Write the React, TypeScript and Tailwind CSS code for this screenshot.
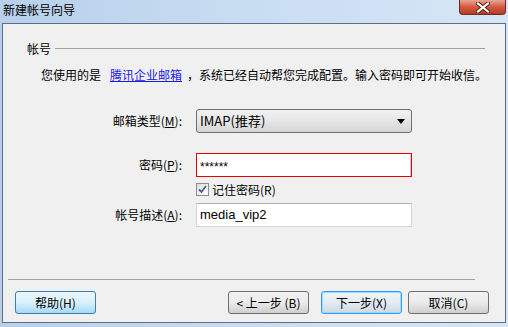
import React from 'react';

const cjk = { fontFamily: '"Microsoft YaHei", "Noto Sans CJK SC", "Liberation Sans", sans-serif' };
const latin = { fontFamily: '"Liberation Sans", "Noto Sans CJK SC", sans-serif' };

type BtnProps = {
  label: React.ReactNode;
  variant?: 'normal' | 'hover' | 'default';
};

const WinButton = ({ label, variant = 'normal' }: BtnProps) => {
  const styles = {
    normal: 'border-[#707070] bg-gradient-to-b from-[#f2f2f2] via-[#ebebeb] to-[#cfcfcf]',
    hover: 'border-[#3c7fb1] bg-gradient-to-b from-[#eaf6fd] via-[#d9f0fc] to-[#a7d9f5]',
    default: 'border-[#3399ff] bg-gradient-to-b from-[#eef5fa] via-[#e3ecf3] to-[#cdd9e3] shadow-[inset_0_0_0_1px_#9fdcf7]',
  };
  return (
    <button
      className={`w-[81px] h-[23px] rounded-[3px] border text-[12px] text-black flex items-center justify-center ${styles[variant]}`}
      style={cjk}
    >
      {label}
    </button>
  );
};

const FieldLabel = ({ children }: { children: React.ReactNode }) => (
  <div className="w-[179px] text-right text-[12px] text-black leading-[24px] whitespace-nowrap" style={cjk}>
    {children}
  </div>
);

const App = () => {
  return (
    <div className="w-[508px] h-[327px] flex flex-col bg-gradient-to-r from-[#b8d0ea] via-[#c9ddf2] to-[#d6e6f6] overflow-hidden">
      {/* title bar */}
      <div className="h-[23px] flex items-start relative">
        <div className="pl-[3px] pt-[2px] text-[12px] leading-[16px] text-black" style={cjk}>
          新建帐号向导
        </div>
        <div className="ml-auto mr-[2px] w-[47px] h-[15px] rounded-b-[4px] border border-t-0 border-[#6e2a20] bg-gradient-to-b from-[#e8a595] via-[#cf5a3f] to-[#b93a22] flex items-center justify-center">
          <svg width="14" height="11" viewBox="0 0 14 11">
            <path d="M2 1.5 L12 9.5 M12 1.5 L2 9.5" stroke="#4a1a12" strokeWidth="4" strokeLinecap="square" />
            <path d="M2 1.5 L12 9.5 M12 1.5 L2 9.5" stroke="#ffffff" strokeWidth="2.2" strokeLinecap="square" />
          </svg>
        </div>
      </div>

      {/* client area */}
      <div className="mx-[2px] mb-[4px] flex-1 border border-[#5f6f82] bg-[#f0f0f0] flex flex-col">
        <div className="mt-[17px] pl-[24px] pr-[20px] flex items-center h-[16px]">
          <span className="text-[12px] leading-[16px] text-black" style={cjk}>帐号</span>
          <div className="ml-[4px] flex-1 border-t border-[#a0a0a0] mt-[-1px]" />
        </div>

        <div className="mt-[10px] pl-[38px] h-[16px] text-[12px] leading-[16px] text-black whitespace-nowrap" style={cjk}>
          您使用的是
          <span className="ml-[9px] mr-[5px] text-[#1a1ae6] underline">腾讯企业邮箱</span>
          ，系统已经自动帮您完成配置。输入密码即可开始收信。
        </div>

        <div className="mt-[26px] flex items-center">
          <FieldLabel>
            邮箱类型(<span className="underline">M</span>):
          </FieldLabel>
          <div className="ml-[14px] w-[216px] h-[24px] rounded-[3px] border border-[#707070] bg-gradient-to-b from-[#f2f2f2] via-[#e6e6e6] to-[#d4d4d4] flex items-center pl-[3px] pr-[6px]">
            <span className="text-[13px] text-black" style={cjk}>IMAP(推荐)</span>
            <svg className="ml-auto" width="8" height="5" viewBox="0 0 8 5">
              <path d="M0 0 H8 L4 5 Z" fill="#000" />
            </svg>
          </div>
        </div>

        <div className="mt-[20px] flex items-center">
          <FieldLabel>
            密码(<span className="underline">P</span>):
          </FieldLabel>
          <div className="ml-[14px] w-[216px] h-[24px] border border-[#e60000] bg-white flex items-center pl-[3px] shadow-[inset_-1px_0_0_#a8d0ec]">
            <span className="text-[12px] text-black leading-none pt-[3px]" style={latin}>******</span>
          </div>
        </div>

        <div className="mt-[6px] ml-[193px] flex items-center h-[13px]">
          <div className="w-[13px] h-[13px] border border-[#8f8f8f] bg-gradient-to-br from-[#dcdcdc] to-[#ffffff] flex items-center justify-center">
            <svg width="9" height="9" viewBox="0 0 9 9">
              <path d="M1 4.5 L3.5 7 L8 1" stroke="#4a5f97" strokeWidth="1.8" fill="none" />
            </svg>
          </div>
          <span className="ml-[3px] text-[12px] text-black" style={cjk}>记住密码(R)</span>
        </div>

        <div className="mt-[7px] flex items-center">
          <FieldLabel>
            帐号描述(<span className="underline">A</span>):
          </FieldLabel>
          <div className="ml-[14px] w-[216px] h-[24px] border border-[#d5d5d5] border-t-[#abadb3] bg-white flex items-center pl-[3px]">
            <span className="text-[13px] text-black" style={latin}>media_vip2</span>
          </div>
        </div>

        <div className="mt-[52px] ml-[5px] mr-[30px] border-t border-[#a0a0a0]" />

        <div className="mt-[11px] flex items-center pl-[12px] pr-[16px]">
          <WinButton variant="hover" label="帮助(H)" />
          <div className="ml-auto flex items-center">
            <WinButton label="< 上一步 (B)" />
            <div className="ml-[12px]">
              <WinButton variant="default" label="下一步(X)" />
            </div>
            <div className="ml-[6px]">
              <WinButton label="取消(C)" />
            </div>
          </div>
        </div>
      </div>
    </div>
  );
};

export default App;
